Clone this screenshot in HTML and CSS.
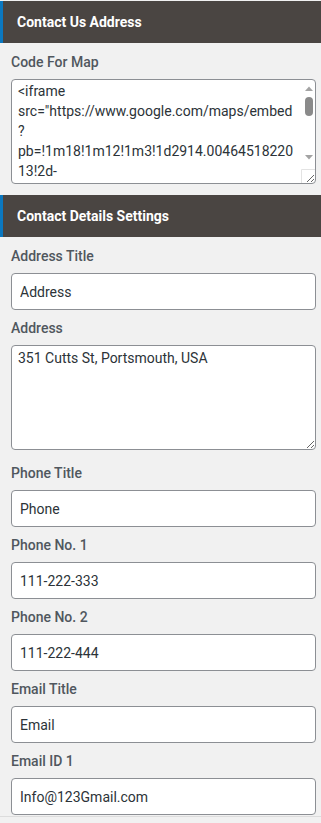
FILE: index.html
```html
<!DOCTYPE html>
<html>
<head>
<meta charset="utf-8">
<link rel="stylesheet" href="styles.css">
</head>
<body>
<div class="panel">
  <div class="section-head">Contact Us Address</div>
  <div class="section-body first">
    <div class="field">
      <label class="field-label">Code For Map</label>
      <div class="textarea-wrap">
        <textarea class="control map-code">&lt;iframe src="https://www.google.com/maps/embed?pb=!1m18!1m12!1m3!1d2914.0046451822013!2d-70.75963068452516!3d43.07620637914566!2m3!1f0!2f0!3f0!3m2!1i1024!2i768!4f13.1!3m3!1m2!1s0x89e2bf7b1b2a0a17%3A0x1a3f3e1b0b1d7d6a!2s351%20Cutts%20St%2C%20Portsmouth%2C%20NH%2003801%2C%20USA!5e0!3m2!1sen!2sin!4v1560000000000!5m2!1sen!2sin" width="600" height="450" frameborder="0" style="border:0" allowfullscreen&gt;&lt;/iframe&gt;</textarea>
        <svg class="fake-scroll" width="14" height="103" viewBox="0 0 14 103">
          <path d="M4 11 L8 6.5 L12 11 Z" fill="#a3a3a3"/>
          <rect x="4" y="17" width="8" height="19" rx="4" fill="#8a8a8a"/>
          <path d="M4 75 L8 79.5 L12 75 Z" fill="#a3a3a3"/>
          <path d="M0.5 103 V89.5 H14" fill="none" stroke="#e3e3e3" stroke-width="1"/>
        </svg>
      </div>
    </div>
  </div>
  <div class="section-head">Contact Details Settings</div>
  <div class="section-body">
    <div class="field">
      <label class="field-label">Address Title</label>
      <input class="control" type="text" value="Address">
    </div>
    <div class="field tall">
      <label class="field-label">Address</label>
      <textarea class="control address">351 Cutts St, Portsmouth, USA</textarea>
    </div>
    <div class="field">
      <label class="field-label">Phone Title</label>
      <input class="control" type="text" value="Phone">
    </div>
    <div class="field">
      <label class="field-label">Phone No. 1</label>
      <input class="control" type="text" value="111-222-333">
    </div>
    <div class="field">
      <label class="field-label">Phone No. 2</label>
      <input class="control" type="text" value="111-222-444">
    </div>
    <div class="field">
      <label class="field-label">Email Title</label>
      <input class="control" type="text" value="Email">
    </div>
    <div class="field last">
      <label class="field-label">Email ID 1</label>
      <input class="control" type="text" value="Info@123Gmail.com">
    </div>
  </div>
</div>
</body>
</html>
```
FILE: styles.css
```css
* { box-sizing: border-box; }
html, body {
  margin: 0;
  padding: 0;
  background: #f1f1f1;
  font-family: Roboto, "Liberation Sans", Arial, sans-serif;
}
.panel {
  width: 321px;
  padding-top: 1px;
}
.section-head {
  height: 42px;
  line-height: 42px;
  background: #4a4542;
  border-left: 3px solid #0b78c0;
  color: #ffffff;
  font-weight: 700;
  font-size: 14px;
  padding-left: 14px;
}
.section-body {
  padding: 9px 5px 0 11px;
  display: flex;
  flex-direction: column;
  gap: 8px;
}
.section-body.first {
  padding-bottom: 11px;
}
.field {
  display: flex;
  flex-direction: column;
  gap: 7px;
}
.field.tall {
  padding-bottom: 5px;
}
.field.last {
  padding-bottom: 1px;
  border-bottom: 1px solid #dcdcdc;
  margin: 0 -5px 0 -11px;
  padding-left: 11px;
  padding-right: 5px;
}
.field-label {
  display: block;
  font-size: 14px;
  line-height: 20px;
  font-weight: 500;
  color: #50575e;
}
.control {
  display: block;
  width: 305px;
  margin: 0;
  background: #ffffff;
  border: 1px solid #8c8f94;
  border-radius: 4px;
  font-family: Roboto, "Liberation Sans", Arial, sans-serif;
  font-size: 14px;
  color: #2c3338;
}
input.control {
  height: 37px;
  padding: 0 8px;
}
textarea.control {
  padding: 1px 6px;
  line-height: 20px;
  resize: vertical;
  height: 105px;
  overflow: hidden;
}
textarea.address {
  padding-top: 2px;
}
.textarea-wrap {
  position: relative;
  width: 305px;
}
textarea.map-code {
  padding-right: 20px;
}
.fake-scroll {
  position: absolute;
  top: 1px;
  right: 1px;
  pointer-events: none;
}
```
